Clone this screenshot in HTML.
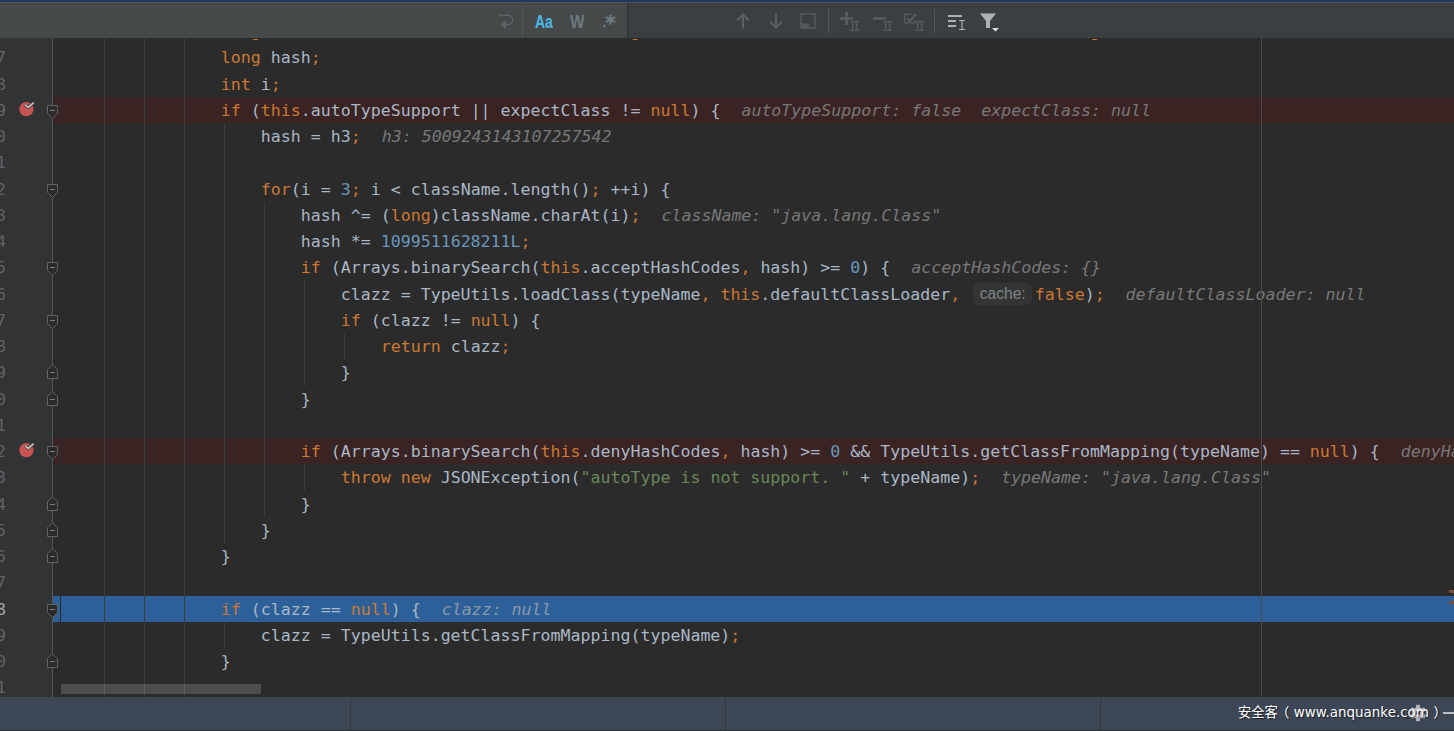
<!DOCTYPE html>
<html lang="en">
<head>
<meta charset="utf-8">
<title>ParserConfig.java - debugger</title>
<style>
*{margin:0;padding:0;box-sizing:border-box}
html,body{width:1454px;height:731px;overflow:hidden;background:#2b2b2b}
body{position:relative;font-family:"DejaVu Sans Mono","Liberation Mono",monospace}
#editor{position:absolute;left:0;top:0;width:1454px;height:697px;overflow:hidden;background:#2b2b2b}
#gutter{position:absolute;left:0;top:0;width:52px;height:697px;background:#313335}
#gutline{position:absolute;left:52px;top:0;width:1px;height:697px;background:#555658}
.row{position:absolute;left:0;width:1454px}
.row.bp::before{content:"";position:absolute;left:53px;right:0;top:0;bottom:0;background:#3a2323}
.row.ex::before{content:"";position:absolute;left:53px;right:0;top:0;bottom:0;background:#2d6099}
.ln{position:absolute;left:-24px;width:30px;text-align:right;top:1px;line-height:26.25px;font-size:16.6px;color:#606366}
.row.ex .ln{color:#a4a3a3}
.code{position:absolute;left:61px;top:1px;font-family:inherit;font-size:16.6px;line-height:26.25px;color:#a9b7c6;white-space:pre}
.row.cut{clip-path:inset(21px 0 0 0)}
.row.cut .code,.row.cut .n{color:#2b2b2b}
.k{color:#cc7832}.n{color:#6897bb}.s{color:#6a8759}
.h{color:#787878;font-style:italic;position:relative;left:1px}
.row.ex .h{color:#8a98aa}
.pill{display:inline-block;font-family:"Liberation Sans","DejaVu Sans",sans-serif;font-size:15.6px;color:#7c848a;background:#343434;border-radius:5px;line-height:21px;height:21.5px;width:59px;text-align:center;padding-left:1px;margin:0 3px 0 2.5px;vertical-align:1px}
.guide{position:absolute;width:1px;background:#3b3b3b}
.fold{position:absolute;left:46px;overflow:visible}
.fold path{fill:#2b2b2b;stroke:#606264;stroke-width:1}
.fold line{stroke:#7a7c7e;stroke-width:1}
.bp-ic{position:absolute;left:19px;overflow:visible}
#margin{position:absolute;left:1261px;top:38px;width:1px;height:659px;background:#4a4a4a}
#gap{position:absolute;left:60px;top:38px;width:1px;height:659px;background:#2b2b2b}
#hscroll{position:absolute;left:61px;top:684px;width:200px;height:10px;background:rgba(255,255,255,.165)}
.stripe{position:absolute;left:1449px;width:5px;height:3px;background:#7b4c38}
#topblue{position:absolute;left:0;top:0;width:1454px;height:2px;background:#1e3a5f}
#topline{position:absolute;left:0;top:2px;width:1454px;height:1px;background:#515355}
#toolbar{position:absolute;left:0;top:3px;width:1454px;height:35px;background:#3c3f41}
#field{position:absolute;left:0;top:0;width:628px;height:35px;background:#45494a;border-right:1px solid #2c2e2f}
#fsep{position:absolute;left:522px;top:3px;width:1px;height:31px;background:#515557}
.tsep{position:absolute;top:6px;width:1px;height:24px;background:#55585a}
.ti{position:absolute;top:0;left:0}
.tt{position:absolute;font-family:"Liberation Sans","DejaVu Sans",sans-serif;line-height:1}
#status{position:absolute;left:0;top:697px;width:1454px;height:34px;background:#3c4655;border-bottom:1px solid #2b2d30}
.ssep{position:absolute;top:-1px;width:1px;height:35px;background:#34373a}
#wm{position:absolute;left:1238px;top:6px;font-family:"DejaVu Sans","Noto Sans CJK SC",sans-serif;font-size:13.3px;line-height:20px;color:#fff;white-space:nowrap;text-shadow:1px 1px 1px rgba(0,0,0,.55)}
</style>
</head>
<body>
<div id="editor">
<div id="gutter"></div>
<div id="gutline"></div>
<div class="row cut" style="top:18px;height:26px"><span class="ln">6</span><pre class="code">                <span class="k">long</span> h3 = (((-3750763034362895579L ^ (<span class="k">long</span>)className.charAt(<span class="n">0</span>)) * <span class="n">1099511628211L</span> ^ (<span class="k">long</span>)className.charAt(<span class="n">1</span>)) * <span class="n">1099511628211L</span> ^ (<span class="k">long</span>)className.charAt(<span class="n">2</span>)) * <span class="n">1099511628211L</span><span class="k">;</span></pre></div>
<div class="row " style="top:44px;height:27px"><span class="ln">7</span><pre class="code">                <span class="k">long</span> hash<span class="k">;</span></pre></div>
<div class="row " style="top:71px;height:26px"><span class="ln">8</span><pre class="code">                <span class="k">int</span> i<span class="k">;</span></pre></div>
<div class="row bp" style="top:97px;height:26px"><span class="ln">9</span><pre class="code">                <span class="k">if</span> (<span class="k">this</span>.autoTypeSupport || expectClass != <span class="k">null</span>) {<span class="h">  autoTypeSupport: false  expectClass: null</span></pre></div>
<div class="row " style="top:123px;height:26px"><span class="ln">0</span><pre class="code">                    hash = h3<span class="k">;</span><span class="h">  h3: 5009243143107257542</span></pre></div>
<div class="row " style="top:149px;height:27px"><span class="ln">1</span><pre class="code"></pre></div>
<div class="row " style="top:176px;height:26px"><span class="ln">2</span><pre class="code">                    <span class="k">for</span>(i = <span class="n">3</span><span class="k">;</span> i &lt; className.length()<span class="k">;</span> ++i) {</pre></div>
<div class="row " style="top:202px;height:26px"><span class="ln">3</span><pre class="code">                        hash ^= (<span class="k">long</span>)className.charAt(i)<span class="k">;</span><span class="h">  className: "java.lang.Class"</span></pre></div>
<div class="row " style="top:228px;height:26px"><span class="ln">4</span><pre class="code">                        hash *= <span class="n">1099511628211L</span><span class="k">;</span></pre></div>
<div class="row " style="top:254px;height:27px"><span class="ln">5</span><pre class="code">                        <span class="k">if</span> (Arrays.binarySearch(<span class="k">this</span>.acceptHashCodes<span class="k">,</span> hash) &gt;= <span class="n">0</span>) {<span class="h">  acceptHashCodes: {}</span></pre></div>
<div class="row " style="top:281px;height:26px"><span class="ln">6</span><pre class="code">                            clazz = TypeUtils.loadClass(typeName<span class="k">,</span> <span class="k">this</span>.defaultClassLoader<span class="k">,</span> <span class="pill">cache:</span><span class="k">false</span>)<span class="k">;</span><span class="h">  defaultClassLoader: null</span></pre></div>
<div class="row " style="top:307px;height:26px"><span class="ln">7</span><pre class="code">                            <span class="k">if</span> (clazz != <span class="k">null</span>) {</pre></div>
<div class="row " style="top:333px;height:26px"><span class="ln">8</span><pre class="code">                                <span class="k">return</span> clazz<span class="k">;</span></pre></div>
<div class="row " style="top:359px;height:27px"><span class="ln">9</span><pre class="code">                            }</pre></div>
<div class="row " style="top:386px;height:26px"><span class="ln">0</span><pre class="code">                        }</pre></div>
<div class="row " style="top:412px;height:26px"><span class="ln">1</span><pre class="code"></pre></div>
<div class="row bp" style="top:438px;height:26px"><span class="ln">2</span><pre class="code">                        <span class="k">if</span> (Arrays.binarySearch(<span class="k">this</span>.denyHashCodes<span class="k">,</span> hash) &gt;= <span class="n">0</span> &amp;&amp; TypeUtils.getClassFromMapping(typeName) == <span class="k">null</span>) {<span class="h">  denyHashCodes: {}</span></pre></div>
<div class="row " style="top:464px;height:27px"><span class="ln">3</span><pre class="code">                            <span class="k">throw new</span> JSONException(<span class="s">"autoType is not support. "</span> + typeName)<span class="k">;</span><span class="h">  typeName: "java.lang.Class"</span></pre></div>
<div class="row " style="top:491px;height:26px"><span class="ln">4</span><pre class="code">                        }</pre></div>
<div class="row " style="top:517px;height:26px"><span class="ln">5</span><pre class="code">                    }</pre></div>
<div class="row " style="top:543px;height:26px"><span class="ln">6</span><pre class="code">                }</pre></div>
<div class="row " style="top:569px;height:27px"><span class="ln">7</span><pre class="code"></pre></div>
<div class="row ex" style="top:596px;height:26px"><span class="ln">8</span><pre class="code">                <span class="k">if</span> (clazz == <span class="k">null</span>) {<span class="h">  clazz: null</span></pre></div>
<div class="row " style="top:622px;height:26px"><span class="ln">9</span><pre class="code">                    clazz = TypeUtils.getClassFromMapping(typeName)<span class="k">;</span></pre></div>
<div class="row " style="top:648px;height:26px"><span class="ln">0</span><pre class="code">                }</pre></div>
<div class="row " style="top:674px;height:27px"><span class="ln">1</span><pre class="code"></pre></div>
<div id="gap"></div>
<div class="guide" style="left:104px;top:38px;height:659px"></div>
<div class="guide" style="left:144px;top:38px;height:659px"></div>
<div class="guide" style="left:184px;top:38px;height:659px"></div>
<div class="guide" style="left:224px;top:123px;height:420px"></div>
<div class="guide" style="left:264px;top:202px;height:315px"></div>
<div class="guide" style="left:304px;top:281px;height:105px"></div>
<div class="guide" style="left:304px;top:464px;height:27px"></div>
<div class="guide" style="left:344px;top:333px;height:26px"></div>
<div class="guide" style="left:224px;top:622px;height:26px"></div>
<div id="margin"></div>
<div id="hscroll"></div>
<div class="stripe" style="top:590px"></div>
<div class="stripe" style="top:601px"></div>
<svg class="fold" style="top:104px" width="13" height="16" viewBox="0 0 13 16"><path d="M1.5 1.5 H11.5 V9.5 L6.5 14.5 L1.5 9.5 Z"/><line x1="4" y1="6.5" x2="9" y2="6.5"/></svg>
<svg class="fold" style="top:183px" width="13" height="16" viewBox="0 0 13 16"><path d="M1.5 1.5 H11.5 V9.5 L6.5 14.5 L1.5 9.5 Z"/><line x1="4" y1="6.5" x2="9" y2="6.5"/></svg>
<svg class="fold" style="top:261px" width="13" height="16" viewBox="0 0 13 16"><path d="M1.5 1.5 H11.5 V9.5 L6.5 14.5 L1.5 9.5 Z"/><line x1="4" y1="6.5" x2="9" y2="6.5"/></svg>
<svg class="fold" style="top:314px" width="13" height="16" viewBox="0 0 13 16"><path d="M1.5 1.5 H11.5 V9.5 L6.5 14.5 L1.5 9.5 Z"/><line x1="4" y1="6.5" x2="9" y2="6.5"/></svg>
<svg class="fold" style="top:445px" width="13" height="16" viewBox="0 0 13 16"><path d="M1.5 1.5 H11.5 V9.5 L6.5 14.5 L1.5 9.5 Z"/><line x1="4" y1="6.5" x2="9" y2="6.5"/></svg>
<svg class="fold" style="top:603px" width="13" height="16" viewBox="0 0 13 16"><path d="M1.5 1.5 H11.5 V9.5 L6.5 14.5 L1.5 9.5 Z"/><line x1="4" y1="6.5" x2="9" y2="6.5"/></svg>
<svg class="fold" style="top:364px" width="13" height="16" viewBox="0 0 13 16"><path d="M1.5 14.5 H11.5 V5.5 L6.5 0.8 L1.5 5.5 Z"/><line x1="4" y1="8.5" x2="9" y2="8.5"/></svg>
<svg class="fold" style="top:391px" width="13" height="16" viewBox="0 0 13 16"><path d="M1.5 14.5 H11.5 V5.5 L6.5 0.8 L1.5 5.5 Z"/><line x1="4" y1="8.5" x2="9" y2="8.5"/></svg>
<svg class="fold" style="top:496px" width="13" height="16" viewBox="0 0 13 16"><path d="M1.5 14.5 H11.5 V5.5 L6.5 0.8 L1.5 5.5 Z"/><line x1="4" y1="8.5" x2="9" y2="8.5"/></svg>
<svg class="fold" style="top:522px" width="13" height="16" viewBox="0 0 13 16"><path d="M1.5 14.5 H11.5 V5.5 L6.5 0.8 L1.5 5.5 Z"/><line x1="4" y1="8.5" x2="9" y2="8.5"/></svg>
<svg class="fold" style="top:548px" width="13" height="16" viewBox="0 0 13 16"><path d="M1.5 14.5 H11.5 V5.5 L6.5 0.8 L1.5 5.5 Z"/><line x1="4" y1="8.5" x2="9" y2="8.5"/></svg>
<svg class="fold" style="top:653px" width="13" height="16" viewBox="0 0 13 16"><path d="M1.5 14.5 H11.5 V5.5 L6.5 0.8 L1.5 5.5 Z"/><line x1="4" y1="8.5" x2="9" y2="8.5"/></svg>
<svg class="bp-ic" style="top:97px" width="18" height="20" viewBox="0 0 18 20"><circle cx="7.4" cy="12.2" r="7.1" fill="#c75450"/><path d="M6.1 7.6 L9.2 10.3 L14.7 5.6" fill="none" stroke="#313335" stroke-width="3.1"/><path d="M6.1 7.6 L9.2 10.3 L14.7 5.6" fill="none" stroke="#c6c9cb" stroke-width="1.7"/></svg>
<svg class="bp-ic" style="top:438px" width="18" height="20" viewBox="0 0 18 20"><circle cx="7.4" cy="12.2" r="7.1" fill="#c75450"/><path d="M6.1 7.6 L9.2 10.3 L14.7 5.6" fill="none" stroke="#313335" stroke-width="3.1"/><path d="M6.1 7.6 L9.2 10.3 L14.7 5.6" fill="none" stroke="#c6c9cb" stroke-width="1.7"/></svg>
</div>
<div id="topblue"></div>
<div id="topline"></div>
<div id="toolbar">
<div id="field"></div>
<div id="fsep"></div>
<div class="tt" style="left:535px;top:11px;font-size:17.5px;font-weight:bold;color:#4cb8e8;transform:scaleX(.8);transform-origin:0 0">Aa</div>
<div class="tt" style="left:569.5px;top:11px;font-size:17.5px;font-weight:bold;color:#6e7981;transform:scaleX(.88);transform-origin:0 0">W</div>
<div class="tt" style="left:602.3px;top:10.8px;font-size:15px;font-weight:bold;color:#6e7981">.</div>
<div class="tt" style="left:605.3px;top:9px;font-size:20px;font-weight:bold;color:#6e7981;-webkit-text-stroke:.5px #6e7981;font-family:'DejaVu Sans','Liberation Sans',sans-serif">*</div>
<div class="tsep" style="left:828px"></div>
<div class="tsep" style="left:934px"></div>
<svg class="ti" width="1454" height="35" viewBox="0 0 1454 35" fill="none">
<!-- soft wrap / newline icon -->
<path d="M498.8 12.2 H508 A4.7 4.7 0 0 1 508 21.6 H505" stroke="#5e6366" stroke-width="1.4"/>
<path d="M506 17.3 V25.9 L500.4 21.6 Z" fill="#5e6366"/>
<!-- up arrow -->
<path d="M743 25.6 V11.8 M737.3 17.5 L743 11.5 L748.7 17.5" stroke="#5c5f61" stroke-width="2.1"/>
<!-- down arrow -->
<path d="M776 10.3 V24.5 M770.3 18.6 L776 24.6 L781.7 18.6" stroke="#5c5f61" stroke-width="2.1"/>
<!-- window icon -->
<rect x="801" y="11" width="14" height="14" stroke="#56595b" stroke-width="1.5"/>
<rect x="801.5" y="20.4" width="7.5" height="4.6" fill="#56595b"/>
<!-- add selection -->
<path d="M846.5 9.3 V22 M840 15.6 H853" stroke="#595c5e" stroke-width="2.8"/>
<path d="M850 18.6 H859.2 M850 27.4 H859.2" stroke="#55585a" stroke-width="1.2"/><path d="M852.7 18.5 V27.5 M856.5 18.5 V27.5" stroke="#55585a" stroke-width="1.7"/>
<!-- remove selection -->
<path d="M873 15.5 H886" stroke="#595c5e" stroke-width="2.8"/>
<path d="M883 18.6 H892 M883 27.4 H892" stroke="#55585a" stroke-width="1.2"/><path d="M885.7 18.5 V27.5 M889.6 18.5 V27.5" stroke="#55585a" stroke-width="1.7"/>
<!-- select all occurrences -->
<path d="M912.5 11.2 H904.7 V19.7 H914.7 V17" stroke="#55585a" stroke-width="1.5"/>
<path d="M906.8 14.9 L909.8 18 L915.8 11.4" stroke="#5a5d5f" stroke-width="1.9"/>
<path d="M915 18.6 H924.2 M915 27.4 H924.2" stroke="#55585a" stroke-width="1.2"/><path d="M917.6 18.5 V27.5 M921.6 18.5 V27.5" stroke="#55585a" stroke-width="1.7"/>
<!-- lines + I-beam -->
<path d="M948 13 H962 M948 18 H956 M948 23 H956" stroke="#afb1b3" stroke-width="1.8"/>
<path d="M959 17.5 H965 M959 26.5 H965 M962 17.5 V26.5" stroke="#afb1b3" stroke-width="1.2"/>
<!-- filter -->
<path d="M980 10.5 H996 L990 18 V25 H986 V18 Z" fill="#afb1b3"/>
<path d="M992 25 H999 L995.5 28.5 Z" fill="#e0e0e0"/>
</svg>
</div>
<div id="status">
<div class="ssep" style="left:350px"></div>
<div class="ssep" style="left:725px"></div>
<div class="ssep" style="left:1100px"></div>
<svg style="position:absolute;left:1408px;top:6px" width="20" height="20" viewBox="0 0 20 20"><g fill="#b2b6bc"><circle cx="10" cy="10" r="5.9"/><rect x="8" y="1.8" width="4" height="16.4"/><rect x="8" y="1.8" width="4" height="16.4" transform="rotate(60 10 10)"/><rect x="8" y="1.8" width="4" height="16.4" transform="rotate(120 10 10)"/></g><circle cx="10" cy="10" r="2.2" fill="#3c4655"/></svg>
<div style="position:absolute;left:1443px;top:15px;width:11px;height:2px;background:#b9bdc3"></div>
<div id="wm">安全客<span style="margin:0 4.6px 0 -2px">（</span><span style="font-size:13.45px">www.anquanke.com</span><span style="margin-left:4.7px">）</span></div>
</div>
</body>
</html>
